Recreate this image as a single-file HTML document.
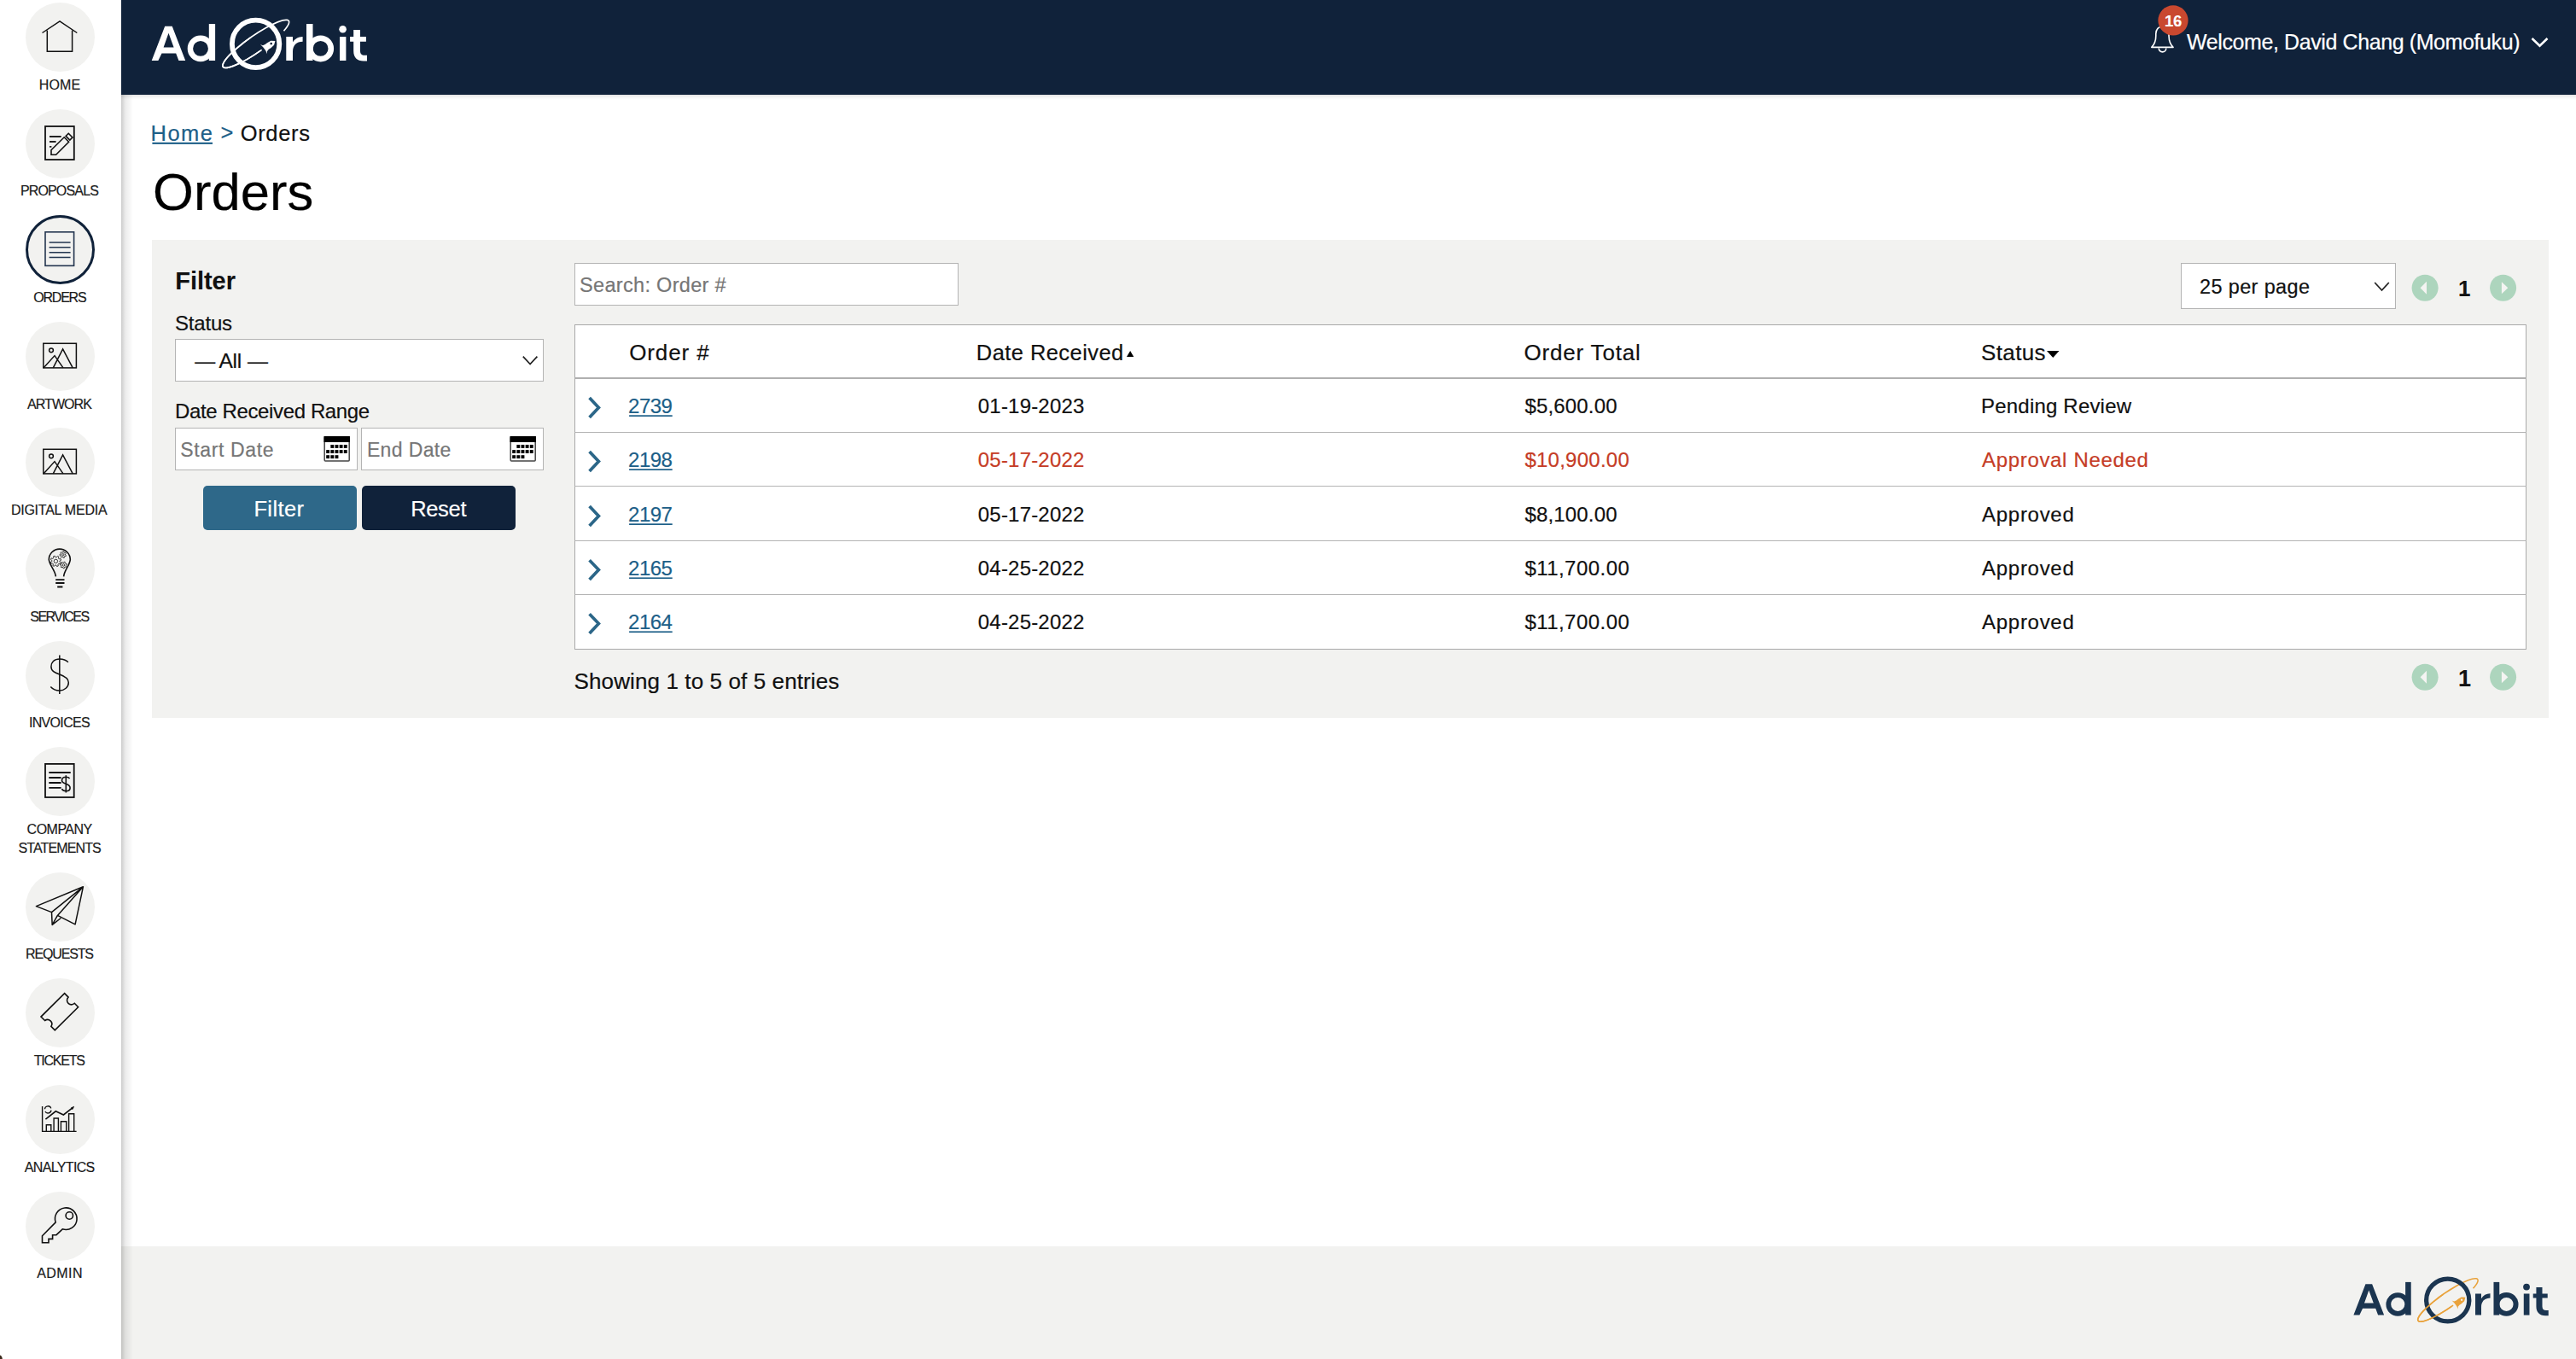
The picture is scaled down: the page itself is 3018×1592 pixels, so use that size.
<!DOCTYPE html>
<html><head><meta charset="utf-8"><title>Orders</title>
<style>
html,body{margin:0;padding:0;}
body{width:3018px;height:1592px;position:relative;overflow:hidden;background:#fff;font-family:"Liberation Sans",sans-serif;}
.abs{position:absolute;display:block;}
.t{position:absolute;white-space:nowrap;font-family:"Liberation Sans",sans-serif;}
.box{position:absolute;box-sizing:border-box;}
</style></head><body>

<div class="box" style="left:142px;top:0;width:2876px;height:111px;background:#10223a;"></div>
<div class="box" style="left:142px;top:111px;width:2876px;height:6px;background:linear-gradient(rgba(0,0,0,0.12),rgba(0,0,0,0.04) 50%,rgba(0,0,0,0));"></div>
<div class="box" style="left:142px;top:1460px;width:2876px;height:132px;background:#f2f2f0;"></div>
<div class="box" style="left:142px;top:111px;width:14px;height:1481px;background:linear-gradient(90deg,rgba(0,0,0,0.2),rgba(0,0,0,0.08) 35%,rgba(0,0,0,0));"></div>
<div class="box" style="left:178px;top:281px;width:2808px;height:560px;background:#f2f2f0;"></div>
<div class="box" style="left:205px;top:397px;width:432px;height:50px;background:#fff;border:1.5px solid #b4b4b4;"></div>
<div class="box" style="left:205px;top:501px;width:214px;height:50px;background:#fff;border:1.5px solid #b4b4b4;"></div>
<div class="box" style="left:423px;top:501px;width:214px;height:50px;background:#fff;border:1.5px solid #b4b4b4;"></div>
<div class="box" style="left:238px;top:569px;width:180px;height:52px;background:#2e6889;border-radius:5px;"></div>
<div class="box" style="left:424px;top:569px;width:180px;height:52px;background:#10223a;border-radius:5px;"></div>
<div class="box" style="left:673px;top:308px;width:450px;height:50px;background:#fff;border:1.5px solid #b4b4b4;"></div>
<div class="box" style="left:2555px;top:308px;width:252px;height:54px;background:#fff;border:1.5px solid #b4b4b4;"></div>
<div class="box" style="left:673px;top:380px;width:2287px;height:381px;background:#fff;border:1px solid #a9a9a9;"></div>
<div class="box" style="left:673px;top:442px;width:2287px;height:2px;background:#b0b0b0;"></div>
<div class="box" style="left:673px;top:506px;width:2287px;height:1px;background:#b4b4b4;"></div>
<div class="box" style="left:673px;top:569px;width:2287px;height:1px;background:#b4b4b4;"></div>
<div class="box" style="left:673px;top:633px;width:2287px;height:1px;background:#b4b4b4;"></div>
<div class="box" style="left:673px;top:696px;width:2287px;height:1px;background:#b4b4b4;"></div>
<svg class="abs" style="left:0;top:0" width="142" height="1592" viewBox="0 0 142 1592"><circle cx="70.5" cy="43.5" r="40.5" fill="#f2f2f0"/><circle cx="70.5" cy="168.5" r="40.5" fill="#f2f2f0"/><circle cx="70.5" cy="292.5" r="39" fill="#f2f2f0" stroke="#10223a" stroke-width="3"/><circle cx="70.5" cy="417.5" r="40.5" fill="#f2f2f0"/><circle cx="70.5" cy="541.5" r="40.5" fill="#f2f2f0"/><circle cx="70.5" cy="666.5" r="40.5" fill="#f2f2f0"/><circle cx="70.5" cy="791.5" r="40.5" fill="#f2f2f0"/><circle cx="70.5" cy="915.5" r="40.5" fill="#f2f2f0"/><circle cx="70.5" cy="1062.5" r="40.5" fill="#f2f2f0"/><circle cx="70.5" cy="1186.5" r="40.5" fill="#f2f2f0"/><circle cx="70.5" cy="1311.5" r="40.5" fill="#f2f2f0"/><circle cx="70.5" cy="1436.5" r="40.5" fill="#f2f2f0"/>
<g fill="none" stroke="#111" stroke-width="1.5" stroke-linejoin="miter">
 <path d="M49.5 38.5 L70 24.8 L90.3 38.5 M55.3 35.8 V60.2 H84.6 V35.8"/>
 <rect x="53" y="148" width="33.8" height="39" stroke-width="1.8"/>
 <path d="M58 160 H71.7 M58 166 H65.6 M58 171.8 H60.4" stroke-width="1.8" stroke="#222"/>
 <path d="M60 175.8 L75.2 160.8 L80.6 166.2 L65.6 181.2 L60 181.2 Z M80.2 156.3 L84.9 161 L81.8 164.1 L77.1 159.4 Z" stroke-width="1.6"/>
</g>
<g fill="none" stroke="#23354f" stroke-width="1.6">
 <rect x="53" y="271.8" width="33.6" height="39.5"/>
 <path d="M57.6 284 H82.6 M57.6 289.8 H82.6 M57.6 295.7 H82.6 M57.6 301.5 H82.6"/>
</g>
<g fill="none" stroke="#111" stroke-width="1.5">
 <rect x="50.8" y="402.3" width="38.6" height="28.6"/>
 <circle cx="60" cy="410.3" r="2.4"/>
 <path d="M51 430.9 L64 416.6 L74 430.9 M62.3 430.9 L73.6 408.8 L85.2 430.9"/>
 <rect x="50.8" y="526.3" width="38.6" height="28.6"/>
 <circle cx="60" cy="534.3" r="2.4"/>
 <path d="M51 554.9 L64 540.6 L74 554.9 M62.3 554.9 L73.6 532.8 L85.2 554.9"/>
</g>
<g fill="none" stroke="#111" stroke-width="1.6">
 <path d="M65.4 675.3 C64.5 668 58 662 57.3 655.6 A12.5 12.5 0 0 1 82.3 655.6 C81.8 662 75.3 668 74.6 675.3"/>
 <path d="M65.2 679.1 H75.5 M65.2 683 H75.5 M67.2 687.5 H73.4" stroke-width="1.9"/>
</g>
<g fill="none" stroke="#222" stroke-width="0.9">
 <path d="M69.91 658.31 L71.38 659.37 L70.63 660.92 L68.89 660.40 L67.94 661.23 L68.24 663.02 L66.61 663.58 L65.74 661.99 L64.49 661.91 L63.43 663.38 L61.88 662.63 L62.40 660.89 L61.57 659.94 L59.78 660.24 L59.22 658.61 L60.81 657.74 L60.89 656.49 L59.42 655.43 L60.17 653.88 L61.91 654.40 L62.86 653.57 L62.56 651.78 L64.19 651.22 L65.06 652.81 L66.31 652.89 L67.37 651.42 L68.92 652.17 L68.40 653.91 L69.23 654.86 L71.02 654.56 L71.58 656.19 L69.99 657.06 Z"/><circle cx="65.4" cy="657.4" r="2.2"/>
 <path d="M76.49 650.07 L77.50 650.68 L77.04 651.78 L75.89 651.50 L75.26 652.07 L75.41 653.24 L74.27 653.57 L73.77 652.50 L72.94 652.36 L72.12 653.21 L71.15 652.52 L71.67 651.46 L71.26 650.72 L70.09 650.61 L70.02 649.42 L71.17 649.17 L71.50 648.39 L70.85 647.40 L71.74 646.61 L72.65 647.36 L73.46 647.12 L73.84 646.00 L75.01 646.20 L75.00 647.38 L75.69 647.87 L76.80 647.46 L77.37 648.50 L76.44 649.23 Z"/><circle cx="73.8" cy="649.8" r="1.2"/>
 <path d="M77.07 662.73 L77.94 663.54 L77.26 664.55 L76.18 664.06 L75.42 664.51 L75.32 665.69 L74.11 665.79 L73.82 664.64 L73.00 664.32 L72.01 664.98 L71.18 664.09 L71.89 663.15 L71.63 662.32 L70.50 661.96 L70.67 660.75 L71.86 660.72 L72.35 659.99 L71.93 658.89 L72.98 658.27 L73.74 659.18 L74.61 659.11 L75.21 658.09 L76.35 658.52 L76.11 659.69 L76.71 660.32 L77.89 660.16 L78.26 661.32 L77.20 661.86 Z"/><circle cx="74.4" cy="661.9" r="1.3"/>
</g>
<g fill="none" stroke="#111" stroke-width="1.5">
 <path d="M69.8 767.6 V813.1"/>
 <path d="M79.9 775.8 C77.5 773.2 74 771.9 69.8 771.9 C63.5 771.9 59.9 776 59.9 781 C59.9 786 64 788 69.8 790 C76 792.2 80.3 795 80.3 799.5 C80.3 805 75.5 809 69.8 809 C65 809 61.5 807 59.3 804.5"/>
</g>
<g fill="none" stroke="#111" stroke-width="1.5">
 <rect x="53" y="894.9" width="33.7" height="39.1" stroke-width="1.8"/>
 <path d="M57.3 905 H82.7 M57.3 911 H71.6 M57.3 917 H71.6 M57.3 922.9 H71.6" stroke-width="1.9"/>
 <path d="M77.3 908.2 V928.6 M81.6 912 C80.8 910.8 79.3 910.2 77.3 910.2 C74.5 910.2 72.5 911.8 72.5 914.2 C72.5 916.6 74.5 917.3 77.3 918.3 C80.3 919.4 82.1 920.4 82.1 923 C82.1 925.4 80 926.8 77.3 926.8 C75 926.8 73.2 925.8 72.4 924.2" stroke-width="1.6"/>
</g>
<g fill="none" stroke="#111" stroke-width="1.5" stroke-linejoin="round">
 <path d="M97.4 1038.8 L42.4 1061.6 L60.5 1068.6 Z M60.5 1068.6 L61.2 1083.4 L67.4 1072.4 L97.4 1038.8 M61.2 1083.4 L71.3 1075.5 M67.4 1072.4 L88.1 1082.8 L97.4 1038.8"/>
</g>
<g fill="none" stroke="#111" stroke-width="1.6" stroke-linejoin="miter">
 <path d="M75.6 1163.6 L80 1168.1 A5.1 5.1 0 0 0 87.3 1175.3 L91.6 1179.7 L64.3 1206.9 L59.9 1202.4 A5.1 5.1 0 0 0 52.6 1195.5 L48 1191.1 Z"/>
</g>
<g fill="none" stroke="#111" stroke-width="1.4">
 <path d="M49.6 1296 V1325.4 H89.6"/>
 <path d="M54.3 1325.4 V1317.8 H59.8 V1325.4 M63.1 1325.4 V1310 H68.4 V1325.4 M71.4 1325.4 V1313.7 H77.7 V1325.4 M80.6 1325.4 V1304.7 H86.7 V1325.4"/>
 <path d="M53.4 1311.2 L65.3 1301.8 L74.4 1306 L85.4 1297.4" stroke-width="1.6"/>
 <path d="M52.4 1299.2 A3.8 3.8 0 0 1 59.8 1298.4 M60 1300.6 A3.8 3.8 0 0 1 52.9 1302" stroke-width="1.3"/><path d="M83.2 1298 L86.6 1296.3 L85 1299.6 Z" fill="#111" stroke-width="0.8"/>
</g>
<g fill="none" stroke="#111" stroke-width="1.6" stroke-linejoin="miter">
 <path d="M65.2 1431.9 L49.5 1447.8 V1455.8 H57 V1451.4 H61.6 V1446.7 H66 L73.2 1439.8 A12.8 12.8 0 1 0 65.2 1431.9 Z"/>
 <circle cx="81.3" cy="1424" r="4.2"/>
</g>
</svg>
<svg class="abs" style="left:0;top:0" width="3018" height="1592" viewBox="0 0 3018 1592"><g transform=""><path fill="#ffffff" fill-rule="evenodd" d="M177.7 71 L193.2 30.7 L201.7 30.7 L217.2 71 L209.4 71 L206.2 62.4 L189.5 62.4 L185.4 71 Z M191.6 55.4 L203.6 55.4 L197.5 38.8 Z"/><path fill="#ffffff" d="M244.8 28 H252.1 V71 H244.8 Z"/><circle cx="235" cy="56.9" r="12.1" fill="none" stroke="#ffffff" stroke-width="6.4"/><path fill="#ffffff" d="M335.3 71 V43.1 H343 V49.5 C345.5 45.3 349.5 43 354.6 42.9 V48.8 C347.5 49 343 53 343 60.5 V71 Z"/><path fill="#ffffff" d="M359 28 H366.5 V71 H359 Z"/><circle cx="375.6" cy="56.9" r="12.2" fill="none" stroke="#ffffff" stroke-width="6.6"/><path fill="#ffffff" d="M398 43.1 H405.4 V71 H398 Z"/><circle cx="401.6" cy="34.3" r="4.3" fill="#ffffff"/><path fill="#ffffff" d="M414.2 34.9 H422 V43.1 H428.9 V48.7 H422 V59.5 C422 63.3 423.8 64.8 427 64.8 H430 V71.6 H426 C418.3 71.6 414.2 67.3 414.2 59.8 V48.7 H410.1 V43.1 H414.2 Z"/><path d="M306.65 58.32 A47 9.6 -35 1 1 332.47 36.21" fill="none" stroke="#ffffff" stroke-width="1.7"/><circle cx="299.6" cy="51.4" r="27.7" fill="none" stroke="#ffffff" stroke-width="5.8"/><clipPath id="llffffff"><path d="M265 2 L334 101 L200 101 L200 2 Z"/></clipPath><path clip-path="url(#llffffff)" d="M306.65 58.32 A47 9.6 -35 1 1 332.47 36.21" fill="none" stroke="#ffffff" stroke-width="1.7"/><path fill="#ffffff" d="M322.44 47.90 L317.33 47.66 L312.99 50.19 L310.68 52.12 L307.78 53.23 L304.96 52.07 L308.25 55.24 L311.07 59.12 L313.07 63.23 L312.84 60.19 L314.79 57.78 L317.34 56.18 L321.09 52.84 Z"/><circle cx="317.7" cy="51.1" r="1.3" fill="#10223a"/></g><g transform="translate(2757.4 1540.6) scale(0.905 0.9) translate(-177.7 -71)"><path fill="#1b3550" fill-rule="evenodd" d="M177.7 71 L193.2 30.7 L201.7 30.7 L217.2 71 L209.4 71 L206.2 62.4 L189.5 62.4 L185.4 71 Z M191.6 55.4 L203.6 55.4 L197.5 38.8 Z"/><path fill="#1b3550" d="M244.8 28 H252.1 V71 H244.8 Z"/><circle cx="235" cy="56.9" r="12.1" fill="none" stroke="#1b3550" stroke-width="6.4"/><path fill="#1b3550" d="M335.3 71 V43.1 H343 V49.5 C345.5 45.3 349.5 43 354.6 42.9 V48.8 C347.5 49 343 53 343 60.5 V71 Z"/><path fill="#1b3550" d="M359 28 H366.5 V71 H359 Z"/><circle cx="375.6" cy="56.9" r="12.2" fill="none" stroke="#1b3550" stroke-width="6.6"/><path fill="#1b3550" d="M398 43.1 H405.4 V71 H398 Z"/><circle cx="401.6" cy="34.3" r="4.3" fill="#1b3550"/><path fill="#1b3550" d="M414.2 34.9 H422 V43.1 H428.9 V48.7 H422 V59.5 C422 63.3 423.8 64.8 427 64.8 H430 V71.6 H426 C418.3 71.6 414.2 67.3 414.2 59.8 V48.7 H410.1 V43.1 H414.2 Z"/><path d="M306.65 58.32 A47 9.6 -35 1 1 332.47 36.21" fill="none" stroke="#e9a23b" stroke-width="1.7"/><circle cx="299.6" cy="51.4" r="27.7" fill="none" stroke="#1b3550" stroke-width="5.8"/><clipPath id="ll1b3550"><path d="M265 2 L334 101 L200 101 L200 2 Z"/></clipPath><path clip-path="url(#ll1b3550)" d="M306.65 58.32 A47 9.6 -35 1 1 332.47 36.21" fill="none" stroke="#e9a23b" stroke-width="1.7"/><path fill="#e9a23b" d="M322.44 47.90 L317.33 47.66 L312.99 50.19 L310.68 52.12 L307.78 53.23 L304.96 52.07 L308.25 55.24 L311.07 59.12 L313.07 63.23 L312.84 60.19 L314.79 57.78 L317.34 56.18 L321.09 52.84 Z"/><circle cx="317.7" cy="51.1" r="1.3" fill="#f2f2f0"/></g><path d="M2520.8 55.4 C2524.6 51.5 2525.8 47 2525.8 42 V39.5 C2525.8 34.5 2529 31 2533.4 31 C2537.8 31 2541 34.5 2541 39.5 V42 C2541 47 2542.2 51.5 2546 55.4 Z" fill="none" stroke="#fff" stroke-width="1.6" stroke-linejoin="round"/><path d="M2529.2 56.6 A4.3 4.3 0 0 0 2537.8 56.6" fill="none" stroke="#fff" stroke-width="1.6"/><circle cx="2546" cy="23.9" r="17.6" fill="#c9482f"/><path d="M2966.5 45 L2975.5 53.8 L2984.5 45" fill="none" stroke="#fff" stroke-width="2.6"/><path d="M612.8 417.6 L621.1 426.6 L629.4 417.6" fill="none" stroke="#222" stroke-width="1.7"/><path d="M2782.2 331 L2790.5 340 L2798.8 331" fill="none" stroke="#222" stroke-width="1.7"/><rect x="380.2" y="511.7" width="29" height="28.3" rx="1" fill="#fff" stroke="#444" stroke-width="1.5"/><rect x="379.5" y="511" width="30.4" height="7" fill="#000"/><rect x="387.35" y="521.00" width="3.9" height="3.9" fill="#000"/><rect x="392.50" y="521.00" width="3.9" height="3.9" fill="#000"/><rect x="397.65" y="521.00" width="3.9" height="3.9" fill="#000"/><rect x="402.80" y="521.00" width="3.9" height="3.9" fill="#000"/><rect x="382.20" y="527.10" width="3.9" height="3.9" fill="#000"/><rect x="387.35" y="527.10" width="3.9" height="3.9" fill="#000"/><rect x="392.50" y="527.10" width="3.9" height="3.9" fill="#000"/><rect x="397.65" y="527.10" width="3.9" height="3.9" fill="#000"/><rect x="402.80" y="527.10" width="3.9" height="3.9" fill="#000"/><rect x="382.20" y="533.20" width="3.9" height="3.9" fill="#000"/><rect x="387.35" y="533.20" width="3.9" height="3.9" fill="#000"/><rect x="392.50" y="533.20" width="3.9" height="3.9" fill="#000"/><rect x="598.2" y="511.7" width="29" height="28.3" rx="1" fill="#fff" stroke="#444" stroke-width="1.5"/><rect x="597.5" y="511" width="30.4" height="7" fill="#000"/><rect x="605.35" y="521.00" width="3.9" height="3.9" fill="#000"/><rect x="610.50" y="521.00" width="3.9" height="3.9" fill="#000"/><rect x="615.65" y="521.00" width="3.9" height="3.9" fill="#000"/><rect x="620.80" y="521.00" width="3.9" height="3.9" fill="#000"/><rect x="600.20" y="527.10" width="3.9" height="3.9" fill="#000"/><rect x="605.35" y="527.10" width="3.9" height="3.9" fill="#000"/><rect x="610.50" y="527.10" width="3.9" height="3.9" fill="#000"/><rect x="615.65" y="527.10" width="3.9" height="3.9" fill="#000"/><rect x="620.80" y="527.10" width="3.9" height="3.9" fill="#000"/><rect x="600.20" y="533.20" width="3.9" height="3.9" fill="#000"/><rect x="605.35" y="533.20" width="3.9" height="3.9" fill="#000"/><rect x="610.50" y="533.20" width="3.9" height="3.9" fill="#000"/><path d="M690.6 466.1 L701.4 477.5 L690.6 488.9" fill="none" stroke="#2b6688" stroke-width="3.7"/><rect x="737.1" y="486.3" width="50.6" height="1.7" fill="#1d5f88"/><path d="M690.6 529.1 L701.4 540.5 L690.6 551.9" fill="none" stroke="#2b6688" stroke-width="3.7"/><rect x="737.1" y="549.3" width="50.6" height="1.7" fill="#1d5f88"/><path d="M690.6 593.1 L701.4 604.5 L690.6 615.9" fill="none" stroke="#2b6688" stroke-width="3.7"/><rect x="737.1" y="613.3" width="50.6" height="1.7" fill="#1d5f88"/><path d="M690.6 656.2 L701.4 667.6 L690.6 679.0" fill="none" stroke="#2b6688" stroke-width="3.7"/><rect x="737.1" y="676.4" width="50.6" height="1.7" fill="#1d5f88"/><path d="M690.6 719.2 L701.4 730.6 L690.6 742.0" fill="none" stroke="#2b6688" stroke-width="3.7"/><rect x="737.1" y="739.4" width="50.6" height="1.7" fill="#1d5f88"/><rect x="178.4" y="166.8" width="70.6" height="2.1" fill="#1d5f88"/><path d="M1320 418 L1328.3 418 L1324.15 410.9 Z" fill="#000"/><path d="M2398 411.1 L2412.5 411.1 L2405.25 419 Z" fill="#000"/><circle cx="2841.1" cy="337.3" r="15.5" fill="#add5bd"/><circle cx="2932.6" cy="337.3" r="15.5" fill="#add5bd"/><path d="M2835.6 337.3 L2843 329.8 L2843 344.8 Z" fill="#f4f4f2"/><path d="M2938.3 337.3 L2930.9 330.3 L2930.9 344.3 Z" fill="#f4f4f2"/><circle cx="2841.1" cy="793.2" r="15.5" fill="#add5bd"/><circle cx="2932.6" cy="793.2" r="15.5" fill="#add5bd"/><path d="M2835.6 793.2 L2843 785.7 L2843 800.7 Z" fill="#f4f4f2"/><path d="M2938.3 793.2 L2930.9 786.2 L2930.9 800.2 Z" fill="#f4f4f2"/><path d="M0 1587.5 Q1.6 1587.8 2.4 1590 L2.8 1592 H0 Z" fill="#3b2a1c"/></svg>
<div class="t" style="left:45.8px;top:92px;font-size:16px;line-height:16px;font-weight:400;color:#1b1b1b;letter-spacing:0.09px;-webkit-text-stroke:0.2px #1b1b1b;">HOME</div>
<div class="t" style="left:23.9px;top:216px;font-size:16px;line-height:16px;font-weight:400;color:#1b1b1b;letter-spacing:-0.84px;-webkit-text-stroke:0.2px #1b1b1b;">PROPOSALS</div>
<div class="t" style="left:39.3px;top:341px;font-size:16px;line-height:16px;font-weight:400;color:#1b1b1b;letter-spacing:-1.24px;-webkit-text-stroke:0.2px #1b1b1b;">ORDERS</div>
<div class="t" style="left:32.0px;top:466px;font-size:16px;line-height:16px;font-weight:400;color:#1b1b1b;letter-spacing:-0.94px;-webkit-text-stroke:0.2px #1b1b1b;">ARTWORK</div>
<div class="t" style="left:12.9px;top:590px;font-size:16px;line-height:16px;font-weight:400;color:#1b1b1b;letter-spacing:-0.24px;-webkit-text-stroke:0.2px #1b1b1b;">DIGITAL MEDIA</div>
<div class="t" style="left:35.3px;top:715px;font-size:16px;line-height:16px;font-weight:400;color:#1b1b1b;letter-spacing:-1.55px;-webkit-text-stroke:0.2px #1b1b1b;">SERVICES</div>
<div class="t" style="left:33.9px;top:839px;font-size:16px;line-height:16px;font-weight:400;color:#1b1b1b;letter-spacing:-0.66px;-webkit-text-stroke:0.2px #1b1b1b;">INVOICES</div>
<div class="t" style="left:31.6px;top:964px;font-size:16px;line-height:16px;font-weight:400;color:#1b1b1b;letter-spacing:-0.51px;-webkit-text-stroke:0.2px #1b1b1b;">COMPANY</div>
<div class="t" style="left:21.4px;top:986px;font-size:16px;line-height:16px;font-weight:400;color:#1b1b1b;letter-spacing:-0.87px;-webkit-text-stroke:0.2px #1b1b1b;">STATEMENTS</div>
<div class="t" style="left:30.1px;top:1110px;font-size:16px;line-height:16px;font-weight:400;color:#1b1b1b;letter-spacing:-1.16px;-webkit-text-stroke:0.2px #1b1b1b;">REQUESTS</div>
<div class="t" style="left:39.7px;top:1235px;font-size:16px;line-height:16px;font-weight:400;color:#1b1b1b;letter-spacing:-1.22px;-webkit-text-stroke:0.2px #1b1b1b;">TICKETS</div>
<div class="t" style="left:28.8px;top:1360px;font-size:16px;line-height:16px;font-weight:400;color:#1b1b1b;letter-spacing:-0.66px;-webkit-text-stroke:0.2px #1b1b1b;">ANALYTICS</div>
<div class="t" style="left:43.2px;top:1484px;font-size:16px;line-height:16px;font-weight:400;color:#1b1b1b;letter-spacing:0.45px;-webkit-text-stroke:0.2px #1b1b1b;">ADMIN</div>
<div class="t" style="left:2562.0px;top:37px;font-size:25.0px;line-height:25px;font-weight:400;color:#ffffff;letter-spacing:-0.40px;-webkit-text-stroke:0.2px #ffffff;">Welcome, David Chang (Momofuku)</div>
<div class="t" style="left:2535.9px;top:16px;font-size:18.5px;line-height:18px;font-weight:700;color:#ffffff;letter-spacing:-0.19px;-webkit-text-stroke:0.1px #ffffff;">16</div>
<div class="t" style="left:176.6px;top:143px;font-size:25.5px;line-height:26px;font-weight:400;color:#1d5f88;letter-spacing:1.45px;-webkit-text-stroke:0.2px #1d5f88;">Home</div>
<div class="t" style="left:258.4px;top:142px;font-size:25.5px;line-height:26px;font-weight:400;color:#1d5f88;letter-spacing:0.00px;-webkit-text-stroke:0.2px #1d5f88;">&gt;</div>
<div class="t" style="left:281.7px;top:143px;font-size:25.5px;line-height:26px;font-weight:400;color:#111111;letter-spacing:0.66px;-webkit-text-stroke:0.2px #111111;">Orders</div>
<div class="t" style="left:179.1px;top:194px;font-size:61.5px;line-height:62px;font-weight:400;color:#000;letter-spacing:0.06px;-webkit-text-stroke:0.2px #000;">Orders</div>
<div class="t" style="left:205.2px;top:315px;font-size:29.0px;line-height:29px;font-weight:700;color:#111111;letter-spacing:-0.02px;-webkit-text-stroke:0.1px #111111;">Filter</div>
<div class="t" style="left:205.0px;top:367px;font-size:24.0px;line-height:24px;font-weight:400;color:#111111;letter-spacing:-0.19px;-webkit-text-stroke:0.2px #111111;">Status</div>
<div class="t" style="left:228.2px;top:411px;font-size:24px;line-height:24px;font-weight:400;color:#111111;letter-spacing:0.00px;-webkit-text-stroke:0.2px #111111;">—</div>
<div class="t" style="left:256.6px;top:411px;font-size:24.5px;line-height:24px;font-weight:400;color:#111111;letter-spacing:-0.34px;-webkit-text-stroke:0.2px #111111;">All</div>
<div class="t" style="left:290.1px;top:411px;font-size:24px;line-height:24px;font-weight:400;color:#111111;letter-spacing:0.00px;-webkit-text-stroke:0.2px #111111;">—</div>
<div class="t" style="left:205.0px;top:470px;font-size:24.0px;line-height:24px;font-weight:400;color:#111111;letter-spacing:-0.37px;-webkit-text-stroke:0.2px #111111;">Date Received Range</div>
<div class="t" style="left:211.2px;top:516px;font-size:23.0px;line-height:23px;font-weight:400;color:#767676;letter-spacing:0.65px;-webkit-text-stroke:0.2px #767676;">Start Date</div>
<div class="t" style="left:429.9px;top:516px;font-size:23.0px;line-height:23px;font-weight:400;color:#767676;letter-spacing:0.37px;-webkit-text-stroke:0.2px #767676;">End Date</div>
<div class="t" style="left:297.4px;top:583px;font-size:25.5px;line-height:26px;font-weight:400;color:#ffffff;letter-spacing:0.39px;-webkit-text-stroke:0.2px #ffffff;">Filter</div>
<div class="t" style="left:481.2px;top:583px;font-size:25.5px;line-height:26px;font-weight:400;color:#ffffff;letter-spacing:-0.33px;-webkit-text-stroke:0.2px #ffffff;">Reset</div>
<div class="t" style="left:679.0px;top:322px;font-size:23.5px;line-height:24px;font-weight:400;color:#767676;letter-spacing:0.32px;-webkit-text-stroke:0.2px #767676;">Search: Order #</div>
<div class="t" style="left:2577.0px;top:324px;font-size:23.5px;line-height:24px;font-weight:400;color:#111111;letter-spacing:0.36px;-webkit-text-stroke:0.2px #111111;">25 per page</div>
<div class="t" style="left:2880.0px;top:325px;font-size:26.0px;line-height:26px;font-weight:700;color:#111111;letter-spacing:0.00px;-webkit-text-stroke:0.1px #111111;">1</div>
<div class="t" style="left:2880.0px;top:782px;font-size:27.0px;line-height:27px;font-weight:700;color:#111111;letter-spacing:0.00px;-webkit-text-stroke:0.1px #111111;">1</div>
<div class="t" style="left:737.2px;top:400px;font-size:26.0px;line-height:26px;font-weight:400;color:#111111;letter-spacing:0.89px;-webkit-text-stroke:0.2px #111111;">Order #</div>
<div class="t" style="left:1143.8px;top:400px;font-size:25.5px;line-height:26px;font-weight:400;color:#111111;letter-spacing:0.43px;-webkit-text-stroke:0.2px #111111;">Date Received</div>
<div class="t" style="left:1785.4px;top:400px;font-size:26.0px;line-height:26px;font-weight:400;color:#111111;letter-spacing:0.83px;-webkit-text-stroke:0.2px #111111;">Order Total</div>
<div class="t" style="left:2321.1px;top:400px;font-size:26.0px;line-height:26px;font-weight:400;color:#111111;letter-spacing:0.34px;-webkit-text-stroke:0.2px #111111;">Status</div>
<div class="t" style="left:736.1px;top:464px;font-size:24.0px;line-height:24px;font-weight:400;color:#1d5f88;letter-spacing:-0.55px;-webkit-text-stroke:0.2px #1d5f88;">2739</div>
<div class="t" style="left:1145.8px;top:464px;font-size:24.0px;line-height:24px;font-weight:400;color:#111111;letter-spacing:0.20px;-webkit-text-stroke:0.2px #111111;">01-19-2023</div>
<div class="t" style="left:1786.4px;top:464px;font-size:24.0px;line-height:24px;font-weight:400;color:#111111;letter-spacing:0.17px;-webkit-text-stroke:0.2px #111111;">$5,600.00</div>
<div class="t" style="left:2321.1px;top:464px;font-size:24.0px;line-height:24px;font-weight:400;color:#111111;letter-spacing:0.19px;-webkit-text-stroke:0.2px #111111;">Pending Review</div>
<div class="t" style="left:736.1px;top:527px;font-size:24.0px;line-height:24px;font-weight:400;color:#1d5f88;letter-spacing:-0.55px;-webkit-text-stroke:0.2px #1d5f88;">2198</div>
<div class="t" style="left:1145.8px;top:527px;font-size:24.0px;line-height:24px;font-weight:400;color:#c53c26;letter-spacing:0.20px;-webkit-text-stroke:0.2px #c53c26;">05-17-2022</div>
<div class="t" style="left:1786.4px;top:527px;font-size:24.0px;line-height:24px;font-weight:400;color:#c53c26;letter-spacing:0.25px;-webkit-text-stroke:0.2px #c53c26;">$10,900.00</div>
<div class="t" style="left:2322.1px;top:527px;font-size:24.0px;line-height:24px;font-weight:400;color:#c53c26;letter-spacing:0.66px;-webkit-text-stroke:0.2px #c53c26;">Approval Needed</div>
<div class="t" style="left:736.1px;top:591px;font-size:24.0px;line-height:24px;font-weight:400;color:#1d5f88;letter-spacing:-0.55px;-webkit-text-stroke:0.2px #1d5f88;">2197</div>
<div class="t" style="left:1145.8px;top:591px;font-size:24.0px;line-height:24px;font-weight:400;color:#111111;letter-spacing:0.20px;-webkit-text-stroke:0.2px #111111;">05-17-2022</div>
<div class="t" style="left:1786.4px;top:591px;font-size:24.0px;line-height:24px;font-weight:400;color:#111111;letter-spacing:0.17px;-webkit-text-stroke:0.2px #111111;">$8,100.00</div>
<div class="t" style="left:2322.1px;top:591px;font-size:24.0px;line-height:24px;font-weight:400;color:#111111;letter-spacing:0.70px;-webkit-text-stroke:0.2px #111111;">Approved</div>
<div class="t" style="left:736.1px;top:654px;font-size:24.0px;line-height:24px;font-weight:400;color:#1d5f88;letter-spacing:-0.55px;-webkit-text-stroke:0.2px #1d5f88;">2165</div>
<div class="t" style="left:1145.8px;top:654px;font-size:24.0px;line-height:24px;font-weight:400;color:#111111;letter-spacing:0.20px;-webkit-text-stroke:0.2px #111111;">04-25-2022</div>
<div class="t" style="left:1786.4px;top:654px;font-size:24.0px;line-height:24px;font-weight:400;color:#111111;letter-spacing:0.45px;-webkit-text-stroke:0.2px #111111;">$11,700.00</div>
<div class="t" style="left:2322.1px;top:654px;font-size:24.0px;line-height:24px;font-weight:400;color:#111111;letter-spacing:0.70px;-webkit-text-stroke:0.2px #111111;">Approved</div>
<div class="t" style="left:736.1px;top:717px;font-size:24.0px;line-height:24px;font-weight:400;color:#1d5f88;letter-spacing:-0.55px;-webkit-text-stroke:0.2px #1d5f88;">2164</div>
<div class="t" style="left:1145.8px;top:717px;font-size:24.0px;line-height:24px;font-weight:400;color:#111111;letter-spacing:0.20px;-webkit-text-stroke:0.2px #111111;">04-25-2022</div>
<div class="t" style="left:1786.4px;top:717px;font-size:24.0px;line-height:24px;font-weight:400;color:#111111;letter-spacing:0.45px;-webkit-text-stroke:0.2px #111111;">$11,700.00</div>
<div class="t" style="left:2322.1px;top:717px;font-size:24.0px;line-height:24px;font-weight:400;color:#111111;letter-spacing:0.70px;-webkit-text-stroke:0.2px #111111;">Approved</div>
<div class="t" style="left:672.6px;top:785px;font-size:26.0px;line-height:26px;font-weight:400;color:#111111;letter-spacing:0.11px;-webkit-text-stroke:0.2px #111111;">Showing 1 to 5 of 5 entries</div>
</body></html>
